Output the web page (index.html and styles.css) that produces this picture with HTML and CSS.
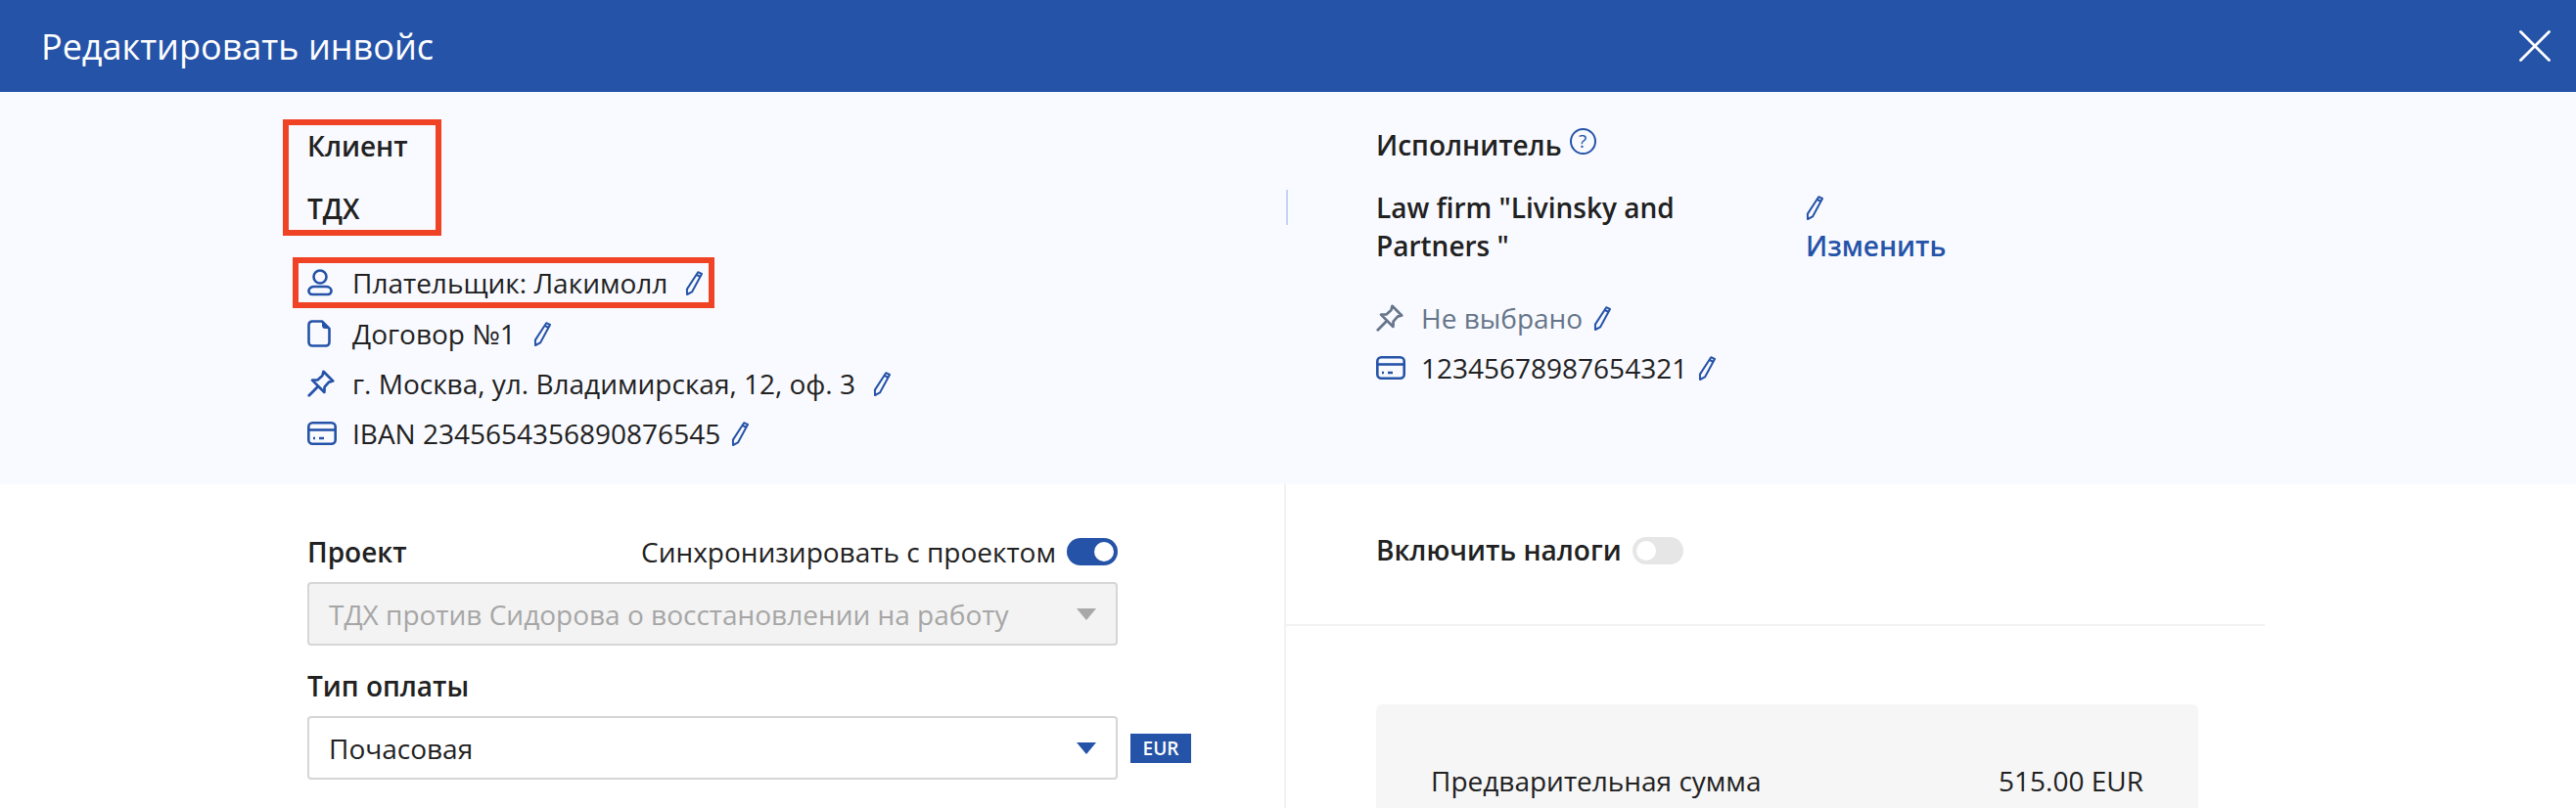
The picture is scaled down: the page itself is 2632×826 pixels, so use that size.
FILE: index.html
```html
<!DOCTYPE html>
<html lang="ru">
<head>
    <meta charset="UTF-8">
    <title>Редактировать инвойс</title>
    <link rel="stylesheet" href="styles.css">
</head>
<body>

<svg class="icon-defs" width="0" height="0">
    <defs>
        <symbol id="i-person" viewBox="0 0 26 28">
            <circle cx="13" cy="8" r="6.5" fill="none" stroke="currentColor" stroke-width="2.6"/>
            <path d="M7 18h12a5.5 4.2 0 0 1 5.5 4.2 a3.5 3.5 0 0 1-3.5 3.8H5a3.5 3.5 0 0 1-3.5-3.8A5.5 4.2 0 0 1 7 18z" fill="none" stroke="currentColor" stroke-width="2.6"/>
        </symbol>
        <symbol id="i-doc" viewBox="0 0 24 28">
            <path d="M5 1.5h10l7.5 7.5v14a3.5 3.5 0 0 1-3.5 3.5H5A3.5 3.5 0 0 1 1.5 23V5A3.5 3.5 0 0 1 5 1.5z" fill="none" stroke="currentColor" stroke-width="2.6" stroke-linejoin="round"/>
            <path d="M15 1.5v4a3.5 3.5 0 0 0 3.5 3.5h4z" fill="currentColor"/>
        </symbol>
        <symbol id="i-pin" viewBox="0 0 28 28">
            <path d="M16.5 1.8 26.2 11.5 22 12.6 17.6 17.6 17.4 23 5 10.6 10.4 10.4 15.4 6z" fill="none" stroke="currentColor" stroke-width="2.7" stroke-linejoin="round"/>
            <path d="M10.5 17.5 1.8 26.2" fill="none" stroke="currentColor" stroke-width="2.8" stroke-linecap="round"/>
        </symbol>
        <symbol id="i-card" viewBox="0 0 30 24">
            <rect x="1.3" y="1.3" width="27.4" height="21.4" rx="4" fill="none" stroke="currentColor" stroke-width="2.6"/>
            <path d="M1.3 8.5h27.4" stroke="currentColor" stroke-width="2.6"/>
            <path d="M6 17h2M12 17h5" stroke="currentColor" stroke-width="2.4"/>
        </symbol>
        <symbol id="i-pencil" viewBox="0 0 19 26">
            <path d="M13.2 2.2 17 4 7 22.4 2 25 1.9 19.6z" fill="none" stroke="currentColor" stroke-width="2" stroke-linejoin="round"/>
            <path d="M11.8 5 15.7 7" fill="none" stroke="currentColor" stroke-width="2"/>
        </symbol>
    </defs>
</svg>

<div class="modal">
    <header class="modal-header">
        <h1>Редактировать инвойс</h1>
        <svg class="close-icon" viewBox="0 0 32 32">
            <path d="M1.5 1.5l29 29M30.5 1.5l-29 29" stroke="#fff" stroke-width="2.8" stroke-linecap="round"/>
        </svg>
    </header>

    <section class="parties">
        <div class="client">
            <div class="client-box">
                <div class="party-title">Клиент</div>
                <div class="party-name">ТДХ</div>
            </div>
            <div class="detail-row detail-row-marked">
                <svg class="detail-icon icon-person"><use href="#i-person"/></svg>
                <span>Плательщик: Лакимолл</span>
                <svg class="pencil"><use href="#i-pencil"/></svg>
            </div>
            <div class="detail-row">
                <svg class="detail-icon icon-doc"><use href="#i-doc"/></svg>
                <span>Договор №1</span>
                <svg class="pencil"><use href="#i-pencil"/></svg>
            </div>
            <div class="detail-row">
                <svg class="detail-icon icon-pin"><use href="#i-pin"/></svg>
                <span>г. Москва, ул. Владимирская, 12, оф. 3</span>
                <svg class="pencil"><use href="#i-pencil"/></svg>
            </div>
            <div class="detail-row detail-row-tight">
                <svg class="detail-icon icon-card"><use href="#i-card"/></svg>
                <span>IBAN 2345654356890876545</span>
                <svg class="pencil"><use href="#i-pencil"/></svg>
            </div>
        </div>

        <div class="contractor">
            <div class="party-title contractor-title">
                Исполнитель
                <span class="help-mark">?</span>
            </div>
            <div class="contractor-name">
                <div class="party-name">Law firm "Livinsky and Partners "</div>
                <div class="contractor-actions">
                    <svg class="pencil"><use href="#i-pencil"/></svg>
                    <a class="change-link">Изменить</a>
                </div>
            </div>
            <div class="detail-row detail-row-muted detail-row-tight">
                <svg class="detail-icon icon-pin"><use href="#i-pin"/></svg>
                <span>Не выбрано</span>
                <svg class="pencil"><use href="#i-pencil"/></svg>
            </div>
            <div class="detail-row detail-row-tight">
                <svg class="detail-icon icon-card"><use href="#i-card"/></svg>
                <span>12345678987654321</span>
                <svg class="pencil"><use href="#i-pencil"/></svg>
            </div>
        </div>
    </section>

    <section class="form-area">
        <div class="form-left">
            <div class="field-head">
                <label class="field-label">Проект</label>
                <div class="sync">
                    <span>Синхронизировать с проектом</span>
                    <span class="toggle toggle-on"></span>
                </div>
            </div>
            <div class="select select-disabled">
                <span>ТДХ против Сидорова о восстановлении на работу</span>
                <span class="caret"></span>
            </div>

            <label class="field-label field-label-second">Тип оплаты</label>
            <div class="select-row">
                <div class="select">
                    <span>Почасовая</span>
                    <span class="caret"></span>
                </div>
                <span class="currency-badge">EUR</span>
            </div>
        </div>

        <div class="form-right">
            <div class="tax-row">
                <span class="tax-label">Включить налоги</span>
                <span class="toggle"></span>
            </div>
            <div class="summary">
                <div class="summary-row">
                    <span>Предварительная сумма</span>
                    <span>515.00 EUR</span>
                </div>
            </div>
        </div>
    </section>
</div>

</body>
</html>
```

FILE: styles.css
```css
* {
    box-sizing: border-box;
}
html, body {
    height: 100%;
}
body {
    margin: 0;
    overflow: hidden;
    font-family: 'Open Sans', sans-serif;
    font-size: 28px;
    color: #212121;
    background: #fff;
}
.icon-defs {
    position: absolute;
}
.modal {
    height: 826px;
    overflow: hidden;
}
.modal-header {
    height: 94px;
    padding: 0 26px 0 42px;
    display: flex;
    align-items: center;
    justify-content: space-between;
    background: #2553a8;
    color: #fff;
}
.modal-header h1 {
    margin: 0;
    font-size: 36px;
    font-weight: 400;
}
.close-icon {
    width: 32px;
    height: 32px;
}

/* client / contractor block */
.parties {
    height: 401px;
    display: grid;
    grid-template-columns: 1314px 1fr;
    background: #f9faff;
}
.client {
    padding: 28px 0 0 289px;
}
.client-box {
    width: 162px;
    height: 119px;
    padding: 4px 0 0 19px;
    border: 6px solid #f04326;
}
.party-title {
    font-weight: 600;
    line-height: 34px;
}
.party-name {
    font-weight: 600;
    line-height: 39px;
}
.client-box .party-name {
    margin-top: 28px;
}
.detail-row {
    display: flex;
    align-items: center;
    height: 51px;
    margin-left: 25px;
    color: #212121;
}
.detail-row span {
    white-space: nowrap;
}
.detail-row-marked {
    width: 431px;
    height: 52px;
    margin: 22px 0 0 10px;
    padding-left: 9px;
    border: 6px solid #f04326;
}
.detail-row-muted {
    color: #66758a;
}
.detail-row-muted .detail-icon {
    color: #66758a;
}
.detail-icon {
    flex: none;
    margin-right: 20px;
    color: #2553a8;
}
.icon-person {
    width: 26px;
    height: 28px;
    margin-right: 20px;
}
.icon-doc {
    width: 24px;
    height: 28px;
    margin-right: 22px;
}
.icon-pin {
    width: 28px;
    height: 28px;
    margin-right: 18px;
}
.icon-card {
    width: 30px;
    height: 24px;
    margin-right: 16px;
}
.pencil {
    flex: none;
    width: 19px;
    height: 26px;
    margin-left: 18px;
    color: #2553a8;
}
.detail-row-tight .pencil {
    margin-left: 11px;
}

.contractor {
    position: relative;
    padding: 37px 0 0 92px;
}
/* short divider between the two parties */
.contractor::before {
    content: "";
    position: absolute;
    left: 0;
    top: 100px;
    width: 2px;
    height: 36px;
    background: #c3d4f3;
}
.contractor-title {
    display: flex;
    align-items: flex-start;
    gap: 8px;
}
.help-mark {
    width: 27px;
    height: 27px;
    margin-top: 0;
    border: 2px solid #2553a8;
    border-radius: 50%;
    color: #2553a8;
    font-size: 19px;
    font-weight: 400;
    line-height: 23px;
    text-align: center;
}
.contractor-name {
    display: grid;
    grid-template-columns: 439px auto;
    margin-top: 28px;
}
.contractor-name .party-name {
    width: 340px;
}
.contractor-actions {
    display: flex;
    flex-direction: column;
    align-items: flex-start;
}
.contractor-actions .pencil {
    margin: 6px 0 0 0;
}
.change-link {
    margin-top: 7px;
    color: #2553a8;
    font-weight: 600;
    line-height: 39px;
}
.contractor .detail-row {
    margin-left: 0;
}
.contractor-name + .detail-row {
    margin-top: 28px;
}

/* lower form */
.form-area {
    height: 331px;
    display: grid;
    grid-template-columns: 1314px 1fr;
}
.form-left {
    padding: 51px 0 0 314px;
    border-right: 2px solid #f2f2f2;
}
.field-head {
    width: 828px;
    height: 36px;
    display: flex;
    align-items: center;
    justify-content: space-between;
}
.field-label {
    font-weight: 600;
    line-height: 36px;
}
.field-label-second {
    display: block;
    margin-top: 23px;
}
.sync {
    display: flex;
    align-items: center;
    gap: 11px;
}
.toggle {
    position: relative;
    display: block;
    width: 52px;
    height: 28px;
    border-radius: 14px;
    background: #e6e6e6;
}
.toggle::after {
    content: "";
    position: absolute;
    left: 4px;
    top: 4px;
    width: 20px;
    height: 20px;
    border-radius: 50%;
    background: #fff;
}
.toggle-on {
    background: #2553a8;
}
.toggle-on::after {
    left: 28px;
}
.select {
    width: 828px;
    height: 65px;
    padding: 0 20px;
    display: flex;
    align-items: center;
    justify-content: space-between;
    border: 2px solid #d6d6d6;
    border-radius: 4px;
    background: #fff;
}
.select-disabled {
    margin-top: 13px;
    background: #f3f3f3;
    color: #a6a6a6;
}
.caret {
    width: 0;
    height: 0;
    border-left: 10px solid transparent;
    border-right: 10px solid transparent;
    border-top: 12px solid #2553a8;
}
.select-disabled .caret {
    border-top-color: #a8a8a8;
}
.select-row {
    display: flex;
    align-items: center;
    gap: 13px;
    margin-top: 13px;
}
.currency-badge {
    width: 62px;
    height: 30px;
    background: #2553a8;
    color: #fff;
    font-size: 19px;
    font-weight: 600;
    line-height: 30px;
    text-align: center;
}

.form-right {
    width: 1000px;
}
.tax-row {
    height: 145px;
    padding: 54px 0 0 92px;
    display: flex;
    align-items: flex-start;
    gap: 11px;
    border-bottom: 2px solid #f2f2f2;
}
.tax-label {
    font-weight: 600;
    line-height: 26px;
}
.summary {
    width: 840px;
    height: 200px;
    margin: 80px 0 0 92px;
    padding: 60px 56px 0;
    border-radius: 6px;
    background: #f6f6f6;
}
.summary-row {
    display: flex;
    justify-content: space-between;
    line-height: 36px;
}
```
